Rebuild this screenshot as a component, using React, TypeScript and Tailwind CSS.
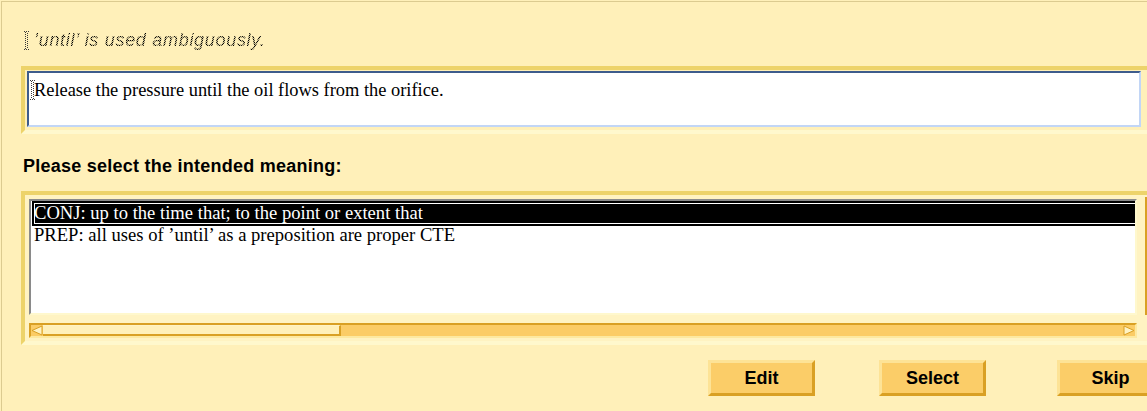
import type { ReactNode } from "react";

const STIPPLE =
  "text-transparent bg-clip-text bg-[image:repeating-conic-gradient(#000_0_25%,#c9bd8e_0_50%)] bg-[length:2px_2px]";

function IBeam({ height }: { height: number }) {
  return (
    <svg width="6" height={height} viewBox={`0 0 6 ${height}`} className="shrink-0">
      <g stroke="#3a3a3a" strokeWidth="1" strokeDasharray="1 1" fill="none">
        <line x1="0" y1="0.5" x2="6" y2="0.5" />
        <line x1="1.5" y1="1" x2="1.5" y2={height - 1} />
        <line x1="3.5" y1="2" x2="3.5" y2={height - 1} />
        <line x1="0" y1={height - 0.5} x2="6" y2={height - 0.5} />
      </g>
    </svg>
  );
}

function ScrollArrow({ dir }: { dir: "left" | "right" }) {
  const pts = dir === "left" ? "1,5.5 11,1 11,10" : "11,5.5 1,1 1,10";
  return (
    <svg width="12" height="11" viewBox="0 0 12 11" className="shrink-0">
      <polygon points={pts} fill="#fff3c4" stroke="#d9a024" strokeWidth="1" />
    </svg>
  );
}

function Button({ children }: { children: ReactNode }) {
  return (
    <button className="w-[107px] h-[36px] shrink-0 bg-[#fbcd68] border-[3px] border-t-[#fde396] border-l-[#fde396] border-b-[#d9a024] border-r-[#d9a024] flex items-center justify-center font-['Liberation_Sans',Arial,sans-serif] font-bold text-[18px] text-black">
      {children}
    </button>
  );
}

export default function App() {
  return (
    <div className="w-[1147px] h-[411px] overflow-hidden bg-[#fff0b9] pt-px pl-px">
      <div className="h-full border-t border-l border-[#dccb90] pl-[19px] flex flex-col">
        {/* disabled message */}
        <div className="mt-[29px] ml-[3px] flex items-center gap-[4px] h-[19px]">
          <IBeam height={19} />
          <span
            className={`font-['Liberation_Sans',Arial,sans-serif] italic text-[18px] leading-[19px] tracking-[0.7px] ${STIPPLE}`}
          >
            ’until’ is used ambiguously.
          </span>
        </div>

        {/* sentence field */}
        <div className="mt-[16px] w-[1131px] shrink-0 border-4 border-t-[#edd36a] border-l-[#edd36a] border-b-[#fff8cd] border-r-[#fff8cd] pt-px pl-[2px] pb-[3px]">
          <div className="w-[1114px] h-[56px] bg-white border-2 border-t-[#3e5c8c] border-l-[#3e5c8c] border-b-[#c2d6f6] border-r-[#c2d6f6] pt-[6px] pl-px flex items-start">
            <div className="mt-px">
              <IBeam height={20} />
            </div>
            <span className="-ml-[2px] font-['Liberation_Serif','Times_New_Roman',serif] text-[18.4px] leading-[22px] text-black">
              Release the pressure until the oil flows from the orifice.
            </span>
          </div>
        </div>

        <div className="mt-[23px] ml-[2px] font-['Liberation_Sans',Arial,sans-serif] font-bold text-[18px] leading-[18px] tracking-[0.25px] text-black">
          Please select the intended meaning:
        </div>

        {/* meaning list */}
        <div className="mt-[16px] w-[1147px] shrink-0 border-4 border-t-[#edd36a] border-l-[#edd36a] border-b-[#fff8cd] border-r-[#fff8cd] bg-[#fff3c2] pt-[4px] pl-[4px] pb-[3px] flex flex-col gap-[8px]">
          <div className="flex gap-[8px]">
            <div className="w-[1108px] h-[116px] bg-white border-2 border-t-[#8a8a8a] border-l-[#8a8a8a] border-b-[#fff8cd] border-r-[#fff8cd] pl-px font-['Liberation_Serif','Times_New_Roman',serif] text-[18.6px] leading-[21px] overflow-hidden">
              <div className="w-[1110px] h-[25px] bg-black text-white pt-px pl-[2px] outline outline-1 outline-white outline-offset-[-3px]">
                CONJ: up to the time that; to the point or extent that
              </div>
              <div className="-mt-[2px] pl-[2px] text-black">
                PREP: all uses of ’until’ as a preposition are proper CTE
              </div>
            </div>
            <div className="w-[15px] -mt-[2px] border-t-2 border-l-2 border-[#d9a024] bg-[#fbcc66]" />
          </div>
          <div className="w-[1108px] h-[15px] border-2 border-t-[#d9a024] border-l-[#d9a024] border-b-[#fde9a0] border-r-[#fde9a0] bg-[#fbcc66] flex items-stretch">
            <ScrollArrow dir="left" />
            <div className="w-[298px] border-t border-t-[#fff3c4] border-b-2 border-r-2 border-b-[#d9a024] border-r-[#d9a024] bg-[#fff0b9]" />
            <div className="flex-1" />
            <ScrollArrow dir="right" />
          </div>
        </div>

        {/* actions */}
        <div className="mt-[15px] ml-[687px] flex">
          <Button>Edit</Button>
          <div className="w-[64px] shrink-0" />
          <Button>Select</Button>
          <div className="w-[71px] shrink-0" />
          <Button>Skip</Button>
        </div>
      </div>
    </div>
  );
}
